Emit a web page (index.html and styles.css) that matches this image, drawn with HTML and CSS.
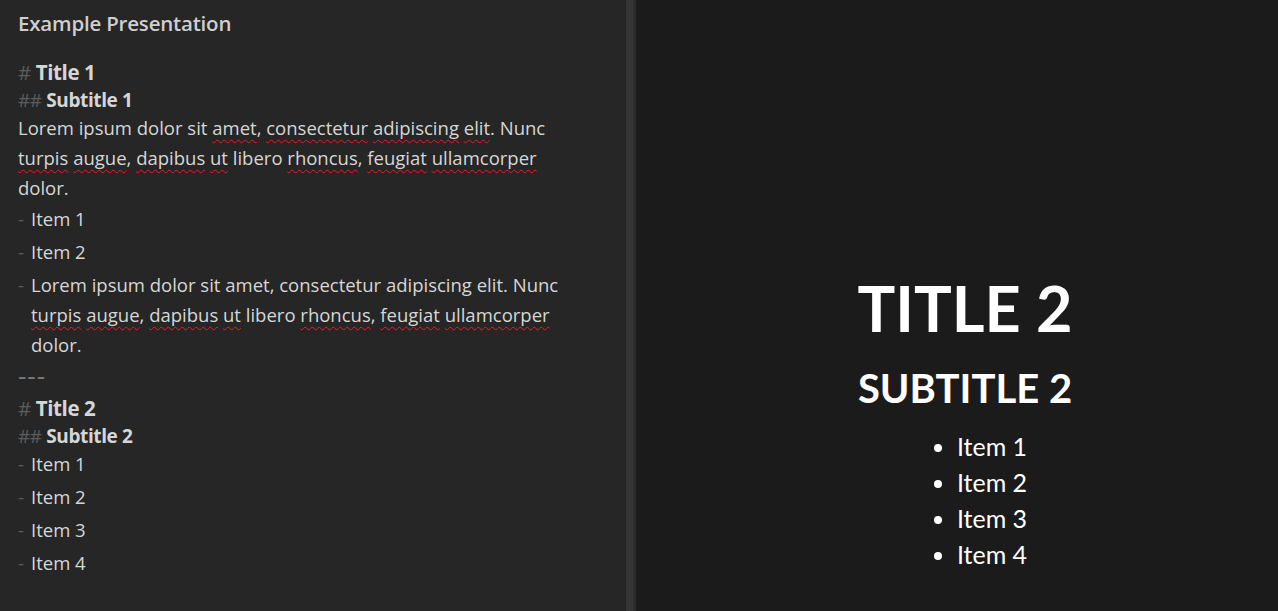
FILE: index.html
```html
<!DOCTYPE html>
<html>
<head>
<meta charset="utf-8">
<link rel="stylesheet" href="styles.css">
</head>
<body>
<div class="app">
  <section class="editor">
    <div class="doc-title">Example Presentation</div>
    <div class="md">
      <div class="h1"><span class="mk">#</span> Title 1</div>
      <div class="h2"><span class="mk">##</span> Subtitle 1</div>
      <p class="para">Lorem ipsum dolor sit <span class="sp">amet</span>, <span class="sp">consectetur</span> <span class="sp">adipiscing</span> <span class="sp">elit</span>. Nunc <span class="sp">turpis</span> <span class="sp">augue</span>, <span class="sp">dapibus</span> <span class="sp">ut</span> libero <span class="sp">rhoncus</span>, <span class="sp">feugiat</span> <span class="sp">ullamcorper</span> dolor.</p>
      <div class="li"><span class="dash">-</span><span class="li-text">Item 1</span></div>
      <div class="li"><span class="dash">-</span><span class="li-text">Item 2</span></div>
      <div class="li"><span class="dash">-</span><span class="li-text">Lorem ipsum dolor sit amet, consectetur adipiscing elit. Nunc <span class="sp">turpis</span> <span class="sp">augue</span>, <span class="sp">dapibus</span> <span class="sp">ut</span> libero <span class="sp">rhoncus</span>, <span class="sp">feugiat</span> <span class="sp">ullamcorper</span> dolor.</span></div>
      <div class="hr">---</div>
      <div class="h1"><span class="mk">#</span> Title 2</div>
      <div class="h2"><span class="mk">##</span> Subtitle 2</div>
      <div class="li"><span class="dash">-</span><span class="li-text">Item 1</span></div>
      <div class="li"><span class="dash">-</span><span class="li-text">Item 2</span></div>
      <div class="li"><span class="dash">-</span><span class="li-text">Item 3</span></div>
      <div class="li"><span class="dash">-</span><span class="li-text">Item 4</span></div>
    </div>
  </section>
  <div class="splitter"><div class="grip"></div><div class="edge"></div></div>
  <section class="preview">
    <div class="slide">
      <h1 class="s-title">Title 2</h1>
      <h2 class="s-sub">Subtitle 2</h2>
      <ul class="s-list">
        <li>Item 1</li>
        <li>Item 2</li>
        <li>Item 3</li>
        <li>Item 4</li>
      </ul>
    </div>
  </section>
</div>
</body>
</html>
```
FILE: styles.css
```css
html, body {
  margin: 0;
  padding: 0;
  height: 100%;
  overflow: hidden;
}
body {
  background: #1b1b1b;
}
.app {
  display: flex;
  height: 611px;
}
.editor {
  width: 626px;
  flex: none;
  background: #262626;
  color: #d6d6d6;
  font-family: "Open Sans", "Noto Sans", sans-serif;
  font-size: 18.5px;
  box-sizing: border-box;
  padding: 8px 48px 0 18px;
}
.doc-title {
  font-weight: 600;
  font-size: 20.5px;
  line-height: 30px;
  color: #cfcfcf;
  letter-spacing: -0.2px;
}
.md {
  margin-top: 19px;
}
.h1 {
  font-weight: 700;
  font-size: 20.5px;
  line-height: 30px;
  letter-spacing: -0.4px;
}
.h2 {
  font-weight: 700;
  font-size: 19px;
  line-height: 26px;
  letter-spacing: -0.4px;
}
.mk {
  color: #5c5c5c;
  font-weight: 400;
}
.para {
  margin: 0 0 -2px 0;
  line-height: 30px;
}
.sp {
  text-decoration: underline wavy #ec1c24;
  text-decoration-thickness: 1.3px;
  text-underline-offset: 4px;
  text-decoration-skip-ink: none;
}
.li {
  display: flex;
  line-height: 30px;
  margin-top: 3px;
}
.h2 + .li {
  margin-top: 0;
}
.dash {
  color: #5c5c5c;
  width: 13px;
  flex: none;
}
.hr {
  color: #7a7a7a;
  font-size: 26px;
  line-height: 30px;
  letter-spacing: 1px;
  margin-bottom: 3px;
}
.splitter {
  display: flex;
  flex: none;
}
.grip {
  width: 7px;
  background: #353535;
}
.edge {
  width: 3px;
  background: #2d2d2d;
}
.preview {
  flex: 1;
  background: #1b1b1b;
  display: flex;
  justify-content: center;
  padding-left: 16px;
}
.slide {
  color: #ffffff;
  font-family: "Lato", "Noto Sans", sans-serif;
  text-align: center;
  padding-top: 268px;
}
.s-title {
  margin: 0;
  font-size: 63px;
  font-weight: 700;
  line-height: 80px;
  text-transform: uppercase;
}
.s-sub {
  margin: 0;
  font-size: 40px;
  font-weight: 700;
  line-height: 80px;
  text-transform: uppercase;
}
.s-list {
  margin: 0 auto;
  padding: 0 0 0 54px;
  display: inline-block;
  text-align: left;
  font-size: 25px;
  line-height: 36px;
}
```
